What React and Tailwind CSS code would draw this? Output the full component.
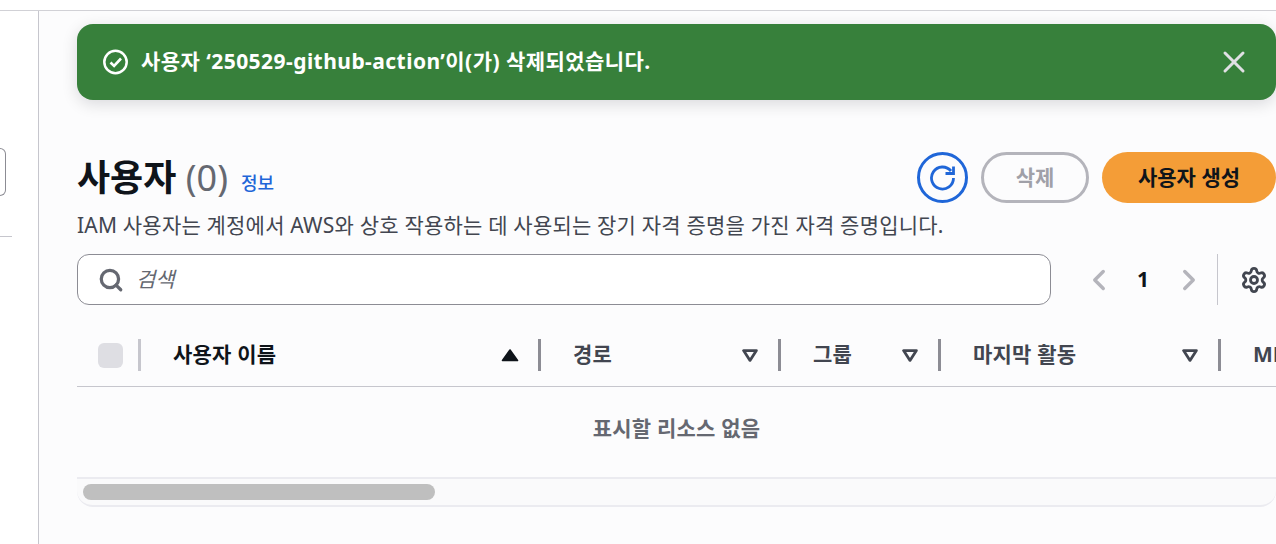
import { Search, X, Settings, ChevronLeft, ChevronRight } from 'lucide-react'

const FONT = "font-['Noto_Sans','Noto_Sans_CJK_KR',sans-serif]"

function SortDown() {
  return (
    <svg width="16" height="16" viewBox="0 0 16 16" fill="none" className="shrink-0">
      <path d="M1.6 3.6h12.8L8 13.4z" stroke="#424650" strokeWidth="2.8" strokeLinejoin="round" />
    </svg>
  )
}

function SortUp() {
  return (
    <svg width="18" height="16" viewBox="0 0 18 16" className="-mr-px shrink-0">
      <path d="M1.5 13.5 9 3l7.5 10.5z" fill="#0f141a" stroke="#0f141a" strokeWidth="1.6" strokeLinejoin="round" />
    </svg>
  )
}

function RefreshIcon() {
  return (
    <svg width="26" height="26" viewBox="0 0 26 26" fill="none" stroke="#1f66d8" strokeWidth="2.8" className="shrink-0">
      <path d="M21 6A11 11 0 1 0 23.5 13" />
      <path d="M15.5 8.5h8V1.5" />
    </svg>
  )
}

function CheckCircle() {
  return (
    <svg width="26" height="26" viewBox="0 0 26 26" fill="none" stroke="white" strokeWidth="2.5">
      <circle cx="12.5" cy="13" r="11.2" />
      <path d="M7.5 13.5l3.6 3.5L18 9.5" strokeWidth="2.6" />
    </svg>
  )
}

function HeaderCell({ width, label, sort, active }) {
  return (
    <div className={`flex h-[32px] shrink-0 items-center pl-[32px] pr-[20px] ${width}`}>
      <span className={`flex-1 whitespace-nowrap text-[21px] font-bold tracking-[0.2px] ${active ? 'text-[#0f141a]' : 'text-[#424650]'}`}>{label}</span>
      {sort}
    </div>
  )
}

function Divider({ color }) {
  return <div className={`h-[32px] w-[3px] shrink-0 ${color}`} />
}

export default function App() {
  return (
    <div className={`flex h-[544px] w-[1276px] flex-col overflow-hidden bg-white ${FONT}`}>
      <div className="h-[11px] shrink-0 border-b border-[#d1d1d6] bg-white" />
      <div className="flex flex-1 overflow-hidden">
        <aside className="w-[39px] shrink-0 overflow-hidden border-r border-[#c6c6cd] bg-white pt-[137px]">
          <div className="h-[48px] w-[6px] rounded-r-lg border border-l-0 border-[#8c8c94]" />
          <div className="mt-[40px] h-px w-[12px] bg-[#c6c6cd]" />
        </aside>

        <main className="min-w-0 flex-1 bg-[#fcfcfd] pl-[38px] pt-[13px]">
          <div className="flex h-[76px] items-center rounded-2xl bg-[#37803b] pl-[26px] pr-[24px] shadow-[0_4px_16px_rgba(0,7,22,0.14)]">
            <CheckCircle />
            <span className="ml-[12px] flex-1 whitespace-nowrap text-[21px] font-bold tracking-[0.45px] text-white">사용자 ‘250529-github-action’이(가) 삭제되었습니다.</span>
            <X size={36} strokeWidth={2} className="text-[#e0e0e4]" />
          </div>

          <div className="mt-[52px] flex items-center">
            <h1 className="whitespace-nowrap text-[36px] leading-[52px] font-bold text-[#0f141a]">
              사용자 <span className="font-normal text-[#656871]">(0)</span>
            </h1>
            <a className="ml-[13px] mt-[11px] text-[18px] font-medium text-[#1f66d8]">정보</a>
            <div className="ml-auto flex items-center self-start">
              <button className="flex h-[51px] w-[51px] items-center justify-center rounded-full border-[3px] border-[#1f66d8]">
                <RefreshIcon />
              </button>
              <button className="ml-[13px] h-[51px] w-[108px] rounded-full border-[3px] border-[#b4b4bb] text-[21px] font-bold text-[#a0a0a8]">삭제</button>
              <button className="ml-[13px] h-[51px] w-[174px] rounded-full bg-[#f49d37] text-[21px] font-bold text-[#0f141a]">사용자 생성</button>
            </div>
          </div>

          <p className="mt-[7px] whitespace-nowrap text-[21px] leading-[28px] tracking-[0.2px] text-[#424650]">
            IAM 사용자는 계정에서 AWS와 상호 작용하는 데 사용되는 장기 자격 증명을 가진 자격 증명입니다.
          </p>

          <div className="mt-[15px] flex items-center">
            <div className="flex h-[51px] w-[974px] items-center rounded-xl border border-[#8c8c94] bg-white pl-[20px]">
              <Search size={26} strokeWidth={3} className="text-[#656871]" />
              <span className="ml-[12px] text-[21px] italic text-[#656871]">검색</span>
            </div>
            <ChevronLeft size={34} strokeWidth={2.4} className="ml-[31px] text-[#b4b4bb]" />
            <span className="ml-[21px] w-[12px] text-center text-[21px] font-bold text-[#0f141a]">1</span>
            <ChevronRight size={34} strokeWidth={2.4} className="ml-[23px] text-[#b4b4bb]" />
            <div className="ml-[11px] h-[51px] w-px bg-[#c6c6cd]" />
            <Settings size={28} strokeWidth={2.4} className="ml-[22px] text-[#424650]" />
          </div>

          <div className="flex h-[82px] items-center overflow-hidden border-b border-[#c6c6cd] pt-[19px]">
            <div className="ml-[21px] h-[25px] w-[25px] shrink-0 rounded-md bg-[#dedee3]" />
            <div className="ml-[15px] h-[32px] w-[3px] shrink-0 bg-[#c6c6cd]" />
            <HeaderCell width="w-[397px]" label="사용자 이름" active sort={<SortUp />} />
            <Divider color="bg-[#8c8c94]" />
            <HeaderCell width="w-[237px]" label="경로" sort={<SortDown />} />
            <Divider color="bg-[#8c8c94]" />
            <HeaderCell width="w-[157px]" label="그룹" sort={<SortDown />} />
            <Divider color="bg-[#8c8c94]" />
            <HeaderCell width="w-[277px]" label="마지막 활동" sort={<SortDown />} />
            <Divider color="bg-[#8c8c94]" />
            <span className="ml-[32px] whitespace-nowrap text-[21px] font-bold text-[#424650]">MFA</span>
          </div>

          <div className="flex h-[92px] items-center justify-center border-b-2 border-[#ebebf0] pb-[6px] text-[21px] font-bold tracking-[0.2px] text-[#656871]">
            표시할 리소스 없음
          </div>

          <div className="flex h-[28px] items-center rounded-b-2xl border-b-2 border-[#ebebf0] bg-[#fafafb] pl-[6px]">
            <div className="h-[16px] w-[352px] rounded-full bg-[#bfbfbf]" />
          </div>
        </main>
      </div>
    </div>
  )
}
